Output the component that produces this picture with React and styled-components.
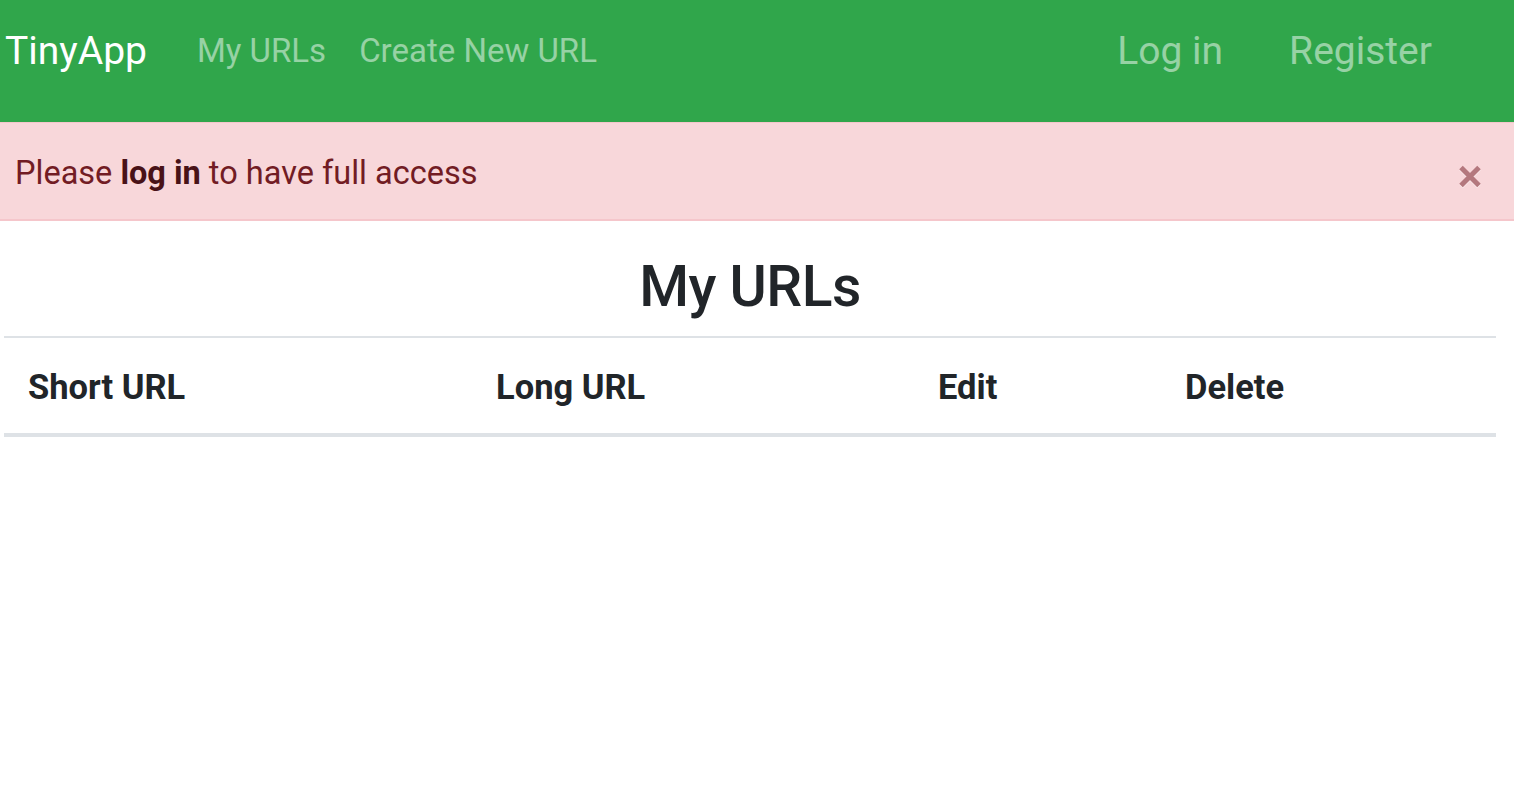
import React from "react";
import styled, { createGlobalStyle } from "styled-components";

const Global = createGlobalStyle`
  html, body { margin: 0; padding: 0; background: #fff; }
  body { font-family: Roboto, "Liberation Sans", sans-serif; color: #212529; }
  * { box-sizing: border-box; }
`;

const Navbar = styled.nav`
  display: flex;
  align-items: baseline;
  height: 122px;
  padding: 22px 82px 0 5px;
  background: #30a64b;
`;

const Brand = styled.a`
  font-size: 39px;
  line-height: 1.5;
  color: #fff;
  text-decoration: none;
  margin-right: 50px;
`;

const NavLink = styled.a`
  font-size: ${(p) => (p.$big ? "39px" : "33px")};
  line-height: 1.5;
  color: rgba(255, 255, 255, 0.5);
  text-decoration: none;
  margin-right: ${(p) => p.$gap || 0}px;
  position: relative;
  top: ${(p) => (p.$big ? "0" : "-2px")};
`;

const Right = styled.div`
  display: flex;
  align-items: baseline;
  margin-left: auto;
`;

const Alert = styled.div`
  display: flex;
  align-items: center;
  justify-content: space-between;
  height: 99px;
  padding: 0 32px 0 15px;
  background: #f8d7da;
  border-top: 1px solid #f5c6cb;
  border-bottom: 2px solid #f5c6cb;
  color: #721c24;
  font-size: 32.5px;
`;

const AlertText = styled.span`
  padding-top: 4px;
  b { font-weight: 700; color: #491217; }
`;

const Close = styled.button`
  display: flex;
  padding: 0;
  margin-top: 10px;
  border: 0;
  background: transparent;
  cursor: pointer;
  opacity: 0.5;
  filter: drop-shadow(0 1px 0 #fff);
`;

const Main = styled.main`
  padding: 0 18px 0 4px;
`;

const Title = styled.h1`
  margin: 0;
  padding-top: 32px;
  height: 115px;
  text-align: center;
  font-size: 57px;
  font-weight: 500;
  line-height: 1.2;
  letter-spacing: -0.5px;
  color: #212529;
`;

const Table = styled.table`
  width: 100%;
  border-collapse: collapse;
  table-layout: fixed;
`;

const Th = styled.th`
  text-align: left;
  font-size: 34.5px;
  font-weight: 700;
  line-height: 1.5;
  padding: 24px 24px 19px;
  border-top: 2px solid #dee2e6;
  border-bottom: 4px solid #dee2e6;
  color: #212529;
`;

export default function App() {
  return (
    <>
      <Global />
      <Navbar>
        <Brand href="#">TinyApp</Brand>
        <NavLink href="#" $gap={33}>My URLs</NavLink>
        <NavLink href="#">Create New URL</NavLink>
        <Right>
          <NavLink href="#" $big $gap={66}>Log in</NavLink>
          <NavLink href="#" $big>Register</NavLink>
        </Right>
      </Navbar>
      <Alert>
        <AlertText>
          Please <b>log in</b> to have full access
        </AlertText>
        <Close aria-label="Close">
          <svg width="24" height="25" viewBox="0 0 24 25">
            <path d="M3 3.5 L21 21.5 M21 3.5 L3 21.5" stroke="#721c24" strokeWidth="5" strokeLinecap="butt" />
          </svg>
        </Close>
      </Alert>
      <Main>
        <Title>My URLs</Title>
        <Table>
          <colgroup>
            <col style={{ width: "468px" }} />
            <col style={{ width: "442px" }} />
            <col style={{ width: "247px" }} />
            <col />
          </colgroup>
          <thead>
            <tr>
              <Th>Short URL</Th>
              <Th>Long URL</Th>
              <Th>Edit</Th>
              <Th>Delete</Th>
            </tr>
          </thead>
        </Table>
      </Main>
    </>
  );
}
